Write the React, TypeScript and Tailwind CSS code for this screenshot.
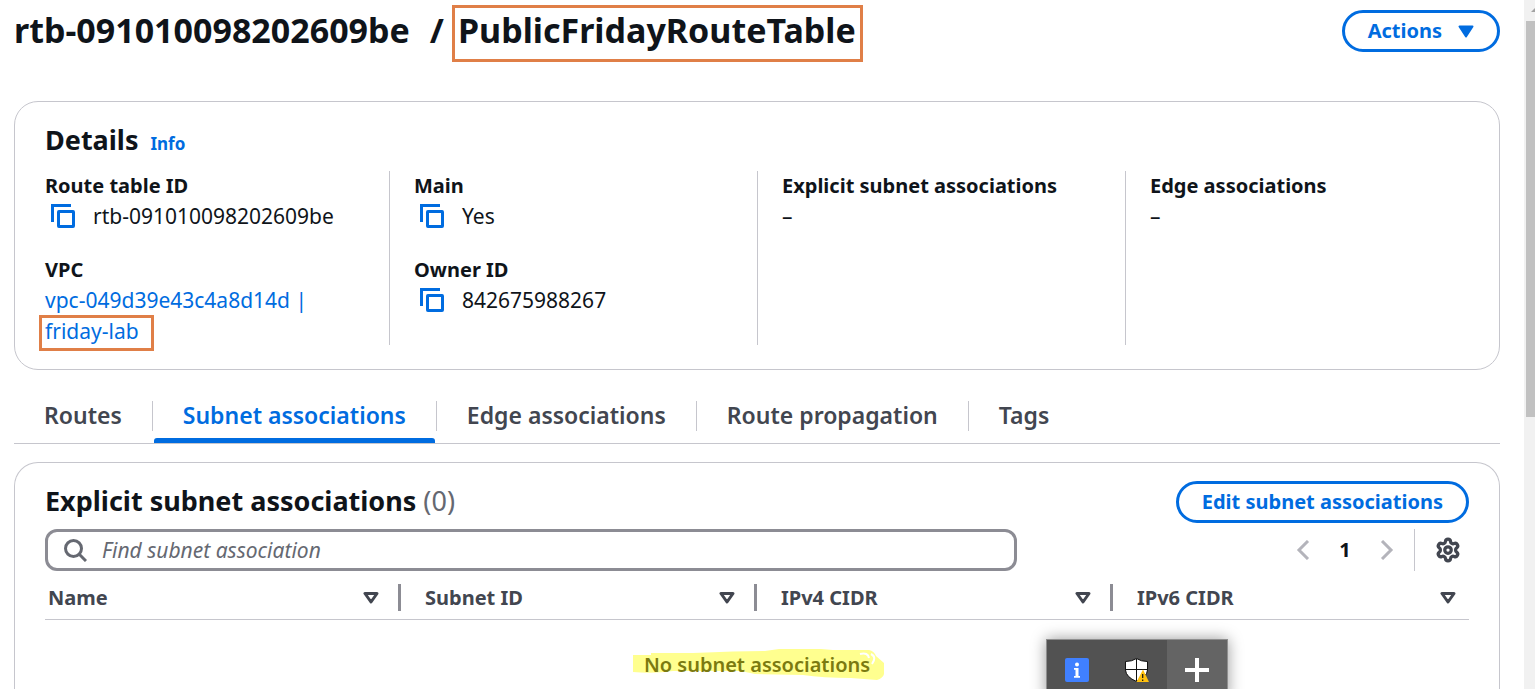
import type { ReactNode } from "react";
import { Settings } from "lucide-react";

function CopyIcon() {
  return (
    <svg width="24" height="24" viewBox="0 0 24 24" fill="none" stroke="#006ce0" strokeWidth="3" aria-hidden="true">
      <path d="M1.5 18V1.5H20" />
      <rect x="7.5" y="7.5" width="15" height="15" rx="0.4" strokeLinejoin="round" />
    </svg>
  );
}

function CopyValue({ children }: { children: ReactNode }) {
  return (
    <div className="flex items-center">
      <button type="button" aria-label="Copy" className="ml-1.5 mr-[18px]">
        <CopyIcon />
      </button>
      {children}
    </div>
  );
}

function Field({ label, children }: { label: string; children: ReactNode }) {
  return (
    <div>
      <dt className="text-[20px] font-bold">{label}</dt>
      <dd>{children}</dd>
    </div>
  );
}

function Details() {
  return (
    <section className="mt-[39px] rounded-[24px] border border-[#c6c6cd] px-[30px] pb-6 pt-[18px]">
      <div className="flex items-baseline gap-3">
        <h2 className="text-[27px] font-bold leading-10">Details</h2>
        <a href="#info" className="text-[17px] font-bold text-[#006ce0]">
          Info
        </a>
      </div>
      <dl className="-mx-6 mt-[11px] grid grid-cols-4 text-[21px] leading-[30px]">
        <div className="flex flex-col gap-6 pl-6">
          <Field label="Route table ID">
            <CopyValue>rtb-091010098202609be</CopyValue>
          </Field>
          <Field label="VPC">
            <a href="#vpc" className="flex flex-col items-start text-[#006ce0]">
              <span>vpc-049d39e43c4a8d14d |</span>
              <span className="-mb-1.5 -ml-1.5 border-[3px] border-[#e07f47] pb-1 pl-[3px] pr-3 leading-[26px]">
                friday-lab
              </span>
            </a>
          </Field>
        </div>
        <div className="flex flex-col gap-6 border-l border-[#c6c6cd] pl-6">
          <Field label="Main">
            <CopyValue>Yes</CopyValue>
          </Field>
          <Field label="Owner ID">
            <CopyValue>842675988267</CopyValue>
          </Field>
        </div>
        <div className="border-l border-[#c6c6cd] pl-6">
          <Field label="Explicit subnet associations">–</Field>
        </div>
        <div className="border-l border-[#c6c6cd] pl-6">
          <Field label="Edge associations">–</Field>
        </div>
      </dl>
    </section>
  );
}

const tabs = ["Routes", "Subnet associations", "Edge associations", "Route propagation", "Tags"];

function Tabs() {
  return (
    <div role="tablist" className="mt-6 flex border-b border-[#c6c6cd]">
      {tabs.map((tab, i) => {
        const active = tab === "Subnet associations";
        return (
          <div key={tab} className="flex items-start">
            {i > 0 && <div className="mt-[7px] h-[30px] w-px bg-[#c6c6cd]" />}
            <button
              type="button"
              role="tab"
              aria-selected={active}
              className={
                active
                  ? "relative h-[49px] px-[30px] pb-[7px] text-[23px] font-semibold text-[#006ce0]"
                  : "h-[49px] px-[30px] pb-[7px] text-[23px] font-semibold text-[#424650]"
              }
            >
              {tab}
              {active && <span className="absolute inset-x-px bottom-0 h-[5px] rounded-t-[3px] bg-[#006ce0]" />}
            </button>
          </div>
        );
      })}
    </div>
  );
}

const columns = ["Name", "Subnet ID", "IPv4 CIDR", "IPv6 CIDR"];

function SortIcon() {
  return (
    <svg width="16" height="12" viewBox="0 0 16 12" fill="none" stroke="#424650" strokeWidth="3" strokeLinejoin="round" aria-hidden="true">
      <path d="M2 1.5h12L8 10z" />
    </svg>
  );
}

function Associations() {
  return (
    <section className="mt-[18px] rounded-t-[24px] border border-b-0 border-[#c6c6cd] px-[30px] pb-20 pt-[18px]">
      <div className="flex items-center justify-between">
        <h2 className="pb-0.5 text-[27px] font-bold leading-10">
          Explicit subnet associations <span className="font-normal text-[#656871]">(0)</span>
        </h2>
        <button
          type="button"
          className="h-[42px] rounded-full border-[3px] border-[#006ce0] px-[23px] text-[20px] font-bold text-[#006ce0]"
        >
          Edit subnet associations
        </button>
      </div>
      <div className="mt-1.5 flex items-center justify-between">
        <div className="flex h-[42px] w-full max-w-[972px] items-center gap-[15px] rounded-[12px] border-[3px] border-[#8c8c94] px-4">
          <svg width="23" height="23" viewBox="0 0 23 23" fill="none" stroke="#656871" strokeWidth="3" aria-hidden="true">
            <circle cx="9.5" cy="9.5" r="8" />
            <path d="M15 15l7 7" />
          </svg>
          <input
            type="text"
            aria-label="Find subnet association"
            placeholder="Find subnet association"
            className="h-9 min-w-0 flex-1 bg-transparent text-[21px] italic outline-none placeholder:text-[#656871]"
          />
        </div>
        <div className="flex items-center">
          <button type="button" aria-label="Previous page" className="flex w-6 justify-center">
            <svg width="14" height="20" viewBox="0 0 14 20" fill="none" stroke="#b4b4bb" strokeWidth="3">
              <path d="M12 1L3 10l9 9" />
            </svg>
          </button>
          <button type="button" className="w-[60px] text-center text-[20px] font-bold">
            1
          </button>
          <button type="button" aria-label="Next page" className="flex w-6 justify-center">
            <svg width="14" height="20" viewBox="0 0 14 20" fill="none" stroke="#b4b4bb" strokeWidth="3">
              <path d="M2 1l9 9-9 9" />
            </svg>
          </button>
          <div className="ml-[15px] h-[42px] w-px bg-[#c6c6cd]" />
          <button type="button" aria-label="Preferences" className="ml-[21px] mr-[9px]">
            <Settings size={26} strokeWidth={3} color="#424650" className="-m-px" />
          </button>
        </div>
      </div>
      <table className="mt-1.5 w-full table-fixed border-collapse">
        <thead>
          <tr className="border-b border-[#c6c6cd]">
            {columns.map((name, i) => {
              const last = i === columns.length - 1;
              return (
                <th key={name} scope="col" className={i === 0 ? "h-[42px] p-0 pl-[3px]" : "h-[42px] p-0 pl-6"}>
                  <div className="flex items-center text-[20px] font-bold leading-[30px] text-[#424650]">
                    {name}
                    <button
                      type="button"
                      aria-label={`Sort by ${name}`}
                      className={last ? "ml-auto mr-[13px]" : "ml-auto mr-[19px]"}
                    >
                      <SortIcon />
                    </button>
                    {!last && <span className="h-[27px] w-[3px] bg-[#8c8c94]" />}
                  </div>
                </th>
              );
            })}
          </tr>
        </thead>
        <tbody>
          <tr>
            <td colSpan={4} className="pt-[30px] text-center text-[20px] font-semibold leading-[30px] text-[#7b7a10]">
              <span className="relative inline-block">
                <svg
                  className="absolute -left-[11px] -top-[2px]"
                  width="251"
                  height="34"
                  viewBox="0 0 251 34"
                  fill="#ffff8f"
                  aria-hidden="true"
                >
                  <path d="M0 7H18V5L60 5L100 3.500L132 3L146 1H188L200 2H236Q241 3 243 8L251 15V26Q250 30 244 32L218 30Q190 30 170 27L122 26L108 23H40Q20 26 0 24Z" />
                  <path d="M227 6q8-2 9 4M238 6q6 3 1 10" stroke="#fff" strokeWidth="2" fill="none" />
                </svg>
                <span className="relative">No subnet associations</span>
              </span>
            </td>
          </tr>
        </tbody>
      </table>
    </section>
  );
}

function FloatingToolbar() {
  return (
    <div className="absolute left-[1046px] top-[639px] flex h-[60px] border border-[#8f8f8f] bg-[#525252] shadow-[0_0_14px_rgba(0,0,0,0.4)]">
      <button type="button" aria-label="Information" className="flex w-[60px] justify-center pt-[18px]">
        <svg width="24" height="24" viewBox="0 0 24 24">
          <rect width="24" height="24" rx="2" fill="#4080ff" />
          <circle cx="12" cy="6.500" r="2" fill="#fff" />
          <path d="M9 10h4.500v8H15v1.800H9V18h1.500v-6.200H9z" fill="#fff" />
        </svg>
      </button>
      <button type="button" aria-label="Security warning" className="flex w-[60px] justify-center pt-[18px]">
        <svg width="24" height="24" viewBox="0 0 24 24">
          <path d="M11.500.5Q16 3.500 22.500 3.500V12Q22 19 11.500 23.500Q1 19 .5 12V3.500Q7 3.500 11.500.5Z" fill="#fff" stroke="#111" />
          <path d="M11.500 1v22M1 11.500h21" stroke="#111" />
          <path d="M18 11.500L24 24H11.500z" fill="#ffc10e" />
          <path d="M17.700 16v4M17.700 21.500v1.500" stroke="#111" strokeWidth="1.200" />
        </svg>
      </button>
      <button type="button" aria-label="Add" className="flex w-[60px] justify-center bg-[#646464] pt-[18px]">
        <svg width="24" height="24" viewBox="0 0 24 24" fill="none" stroke="#fff" strokeWidth="4">
          <path d="M12 0v24M0 12h24" />
        </svg>
      </button>
    </div>
  );
}

export default function App() {
  return (
    <div className="relative flex h-screen overflow-hidden bg-white font-['Noto_Sans',sans-serif] text-[20px] text-[#0f141a]">
      <main className="min-w-0 flex-1 pl-3.5 pr-6">
        <header className="flex items-start justify-between pt-[5px]">
          <h1 className="flex items-center text-[34px] font-bold leading-[45px]">
            <span className="pb-1.5">rtb-091010098202609be</span>
            <span className="ml-5 mr-2 pb-1.5">/</span>
            <span className="border-[3px] border-[#e07f47] pb-1.5 pl-[3px] pr-1">PublicFridayRouteTable</span>
          </h1>
          <button
            type="button"
            className="mt-[5px] flex h-[42px] items-center gap-4 rounded-full border-[3px] border-[#006ce0] px-[23px] text-[20px] font-bold text-[#006ce0]"
          >
            Actions
            <svg width="16" height="13" viewBox="0 0 16 13" fill="#006ce0" stroke="#006ce0" strokeWidth="2" strokeLinejoin="round" aria-hidden="true">
              <path d="M1.500 1.500h13L8 11.500z" />
            </svg>
          </button>
        </header>
        <Details />
        <Tabs />
        <Associations />
      </main>
      <div className="flex w-[11px] flex-col bg-[#f1f1f1] pl-0.5" aria-hidden="true">
        <svg width="9" height="21" viewBox="0 0 9 21" fill="#a3a3a3">
          <path d="M5 12l5-5v5z" />
        </svg>
        <div className="h-[396px] bg-[#c1c1c1]" />
      </div>
      <FloatingToolbar />
    </div>
  );
}
